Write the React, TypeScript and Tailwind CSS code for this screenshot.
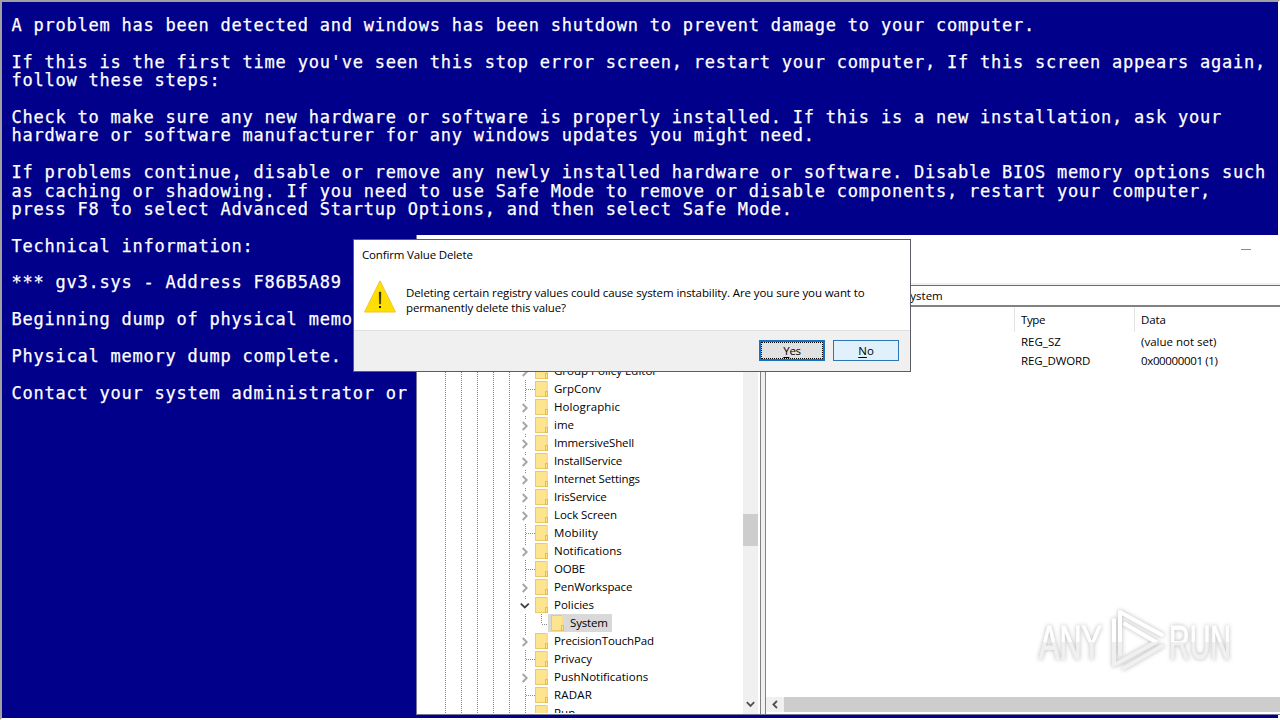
import React from "react";

const stopText: string[] = [
  "A problem has been detected and windows has been shutdown to prevent damage to your computer.",
  "",
  "If this is the first time you've seen this stop error screen, restart your computer, If this screen appears again,",
  "follow these steps:",
  "",
  "Check to make sure any new hardware or software is properly installed. If this is a new installation, ask your",
  "hardware or software manufacturer for any windows updates you might need.",
  "",
  "If problems continue, disable or remove any newly installed hardware or software. Disable BIOS memory options such",
  "as caching or shadowing. If you need to use Safe Mode to remove or disable components, restart your computer,",
  "press F8 to select Advanced Startup Options, and then select Safe Mode.",
  "",
  "Technical information:",
  "",
  "*** gv3.sys - Address F86B5A89",
  "",
  "Beginning dump of physical memo",
  "",
  "Physical memory dump complete.",
  "",
  "Contact your system administrator or",
];

type Kind = "closed" | "leaf" | "open" | "child";
type Row = { name: string; kind: Kind; spacing: string };

const rows: Row[] = [
  { name: "Group Policy Editor", kind: "closed", spacing: "tracking-normal" },
  { name: "GrpConv", kind: "leaf", spacing: "tracking-normal" },
  { name: "Holographic", kind: "closed", spacing: "tracking-[0.09px]" },
  { name: "ime", kind: "closed", spacing: "tracking-normal" },
  { name: "ImmersiveShell", kind: "closed", spacing: "tracking-[-0.14px]" },
  { name: "InstallService", kind: "closed", spacing: "tracking-[-0.14px]" },
  { name: "Internet Settings", kind: "closed", spacing: "tracking-[-0.17px]" },
  { name: "IrisService", kind: "closed", spacing: "tracking-[-0.17px]" },
  { name: "Lock Screen", kind: "closed", spacing: "tracking-[-0.09px]" },
  { name: "Mobility", kind: "leaf", spacing: "tracking-[0.12px]" },
  { name: "Notifications", kind: "closed", spacing: "tracking-normal" },
  { name: "OOBE", kind: "leaf", spacing: "tracking-[-0.2px]" },
  { name: "PenWorkspace", kind: "closed", spacing: "tracking-[-0.1px]" },
  { name: "Policies", kind: "open", spacing: "tracking-normal" },
  { name: "System", kind: "child", spacing: "tracking-[-0.15px]" },
  { name: "PrecisionTouchPad", kind: "closed", spacing: "tracking-[-0.12px]" },
  { name: "Privacy", kind: "leaf", spacing: "tracking-normal" },
  { name: "PushNotifications", kind: "closed", spacing: "tracking-normal" },
  { name: "RADAR", kind: "leaf", spacing: "tracking-[0.2px]" },
  { name: "Run", kind: "leaf", spacing: "tracking-normal" },
];

function Folder() {
  return (
    <svg className="h-[18px] w-[13px] shrink-0" viewBox="0 0 13 18" shapeRendering="crispEdges">
      <rect x="0" y="1" width="13" height="16" fill="#ecca6c" />
      <rect x="1" y="2" width="10" height="14" fill="#fde48f" />
      <rect x="11" y="1" width="2" height="10" fill="#f6dc8c" />
      <rect x="10" y="11" width="3" height="6" fill="#e9bd4c" />
      <rect x="11" y="12" width="1" height="4" fill="#ffe680" />
    </svg>
  );
}

/* Guide lines of the ancestors, one every 16px, then the row's own branch. */
function Guides({ kind }: { kind: Kind }) {
  const dots = { stroke: "#8a8a8a", strokeWidth: 1, strokeDasharray: "1 1" };
  return (
    <svg className="h-[18px] w-[118px] shrink-0" viewBox="0 0 118 18">
      {[28.5, 44.5, 60.5, 76.5, 92.5].map((x) => (
        <path key={x} d={`M${x} 0V18`} fill="none" {...dots} />
      ))}
      {kind === "leaf" && <path d="M108.5 0V18M109 9.5H118" fill="none" {...dots} />}
      {kind === "child" && <path d="M108.5 0V18" fill="none" {...dots} />}
      {(kind === "closed" || kind === "open") && <path d="M108.5 0V3" fill="none" {...dots} />}
      {kind === "closed" && (
        <path d="M105.7 6L109.7 10L105.7 14" fill="none" stroke="#a6a6a6" strokeWidth="1.9" />
      )}
      {kind === "open" && (
        <path d="M103.8 7.7L107.8 11.5L111.8 7.7" fill="none" stroke="#404040" strokeWidth="1.8" />
      )}
    </svg>
  );
}

function TreeRow({ row }: { row: Row }) {
  if (row.kind === "child") {
    return (
      <div className="flex h-[18px]">
        <Guides kind="child" />
        <svg className="h-[18px] w-[13px] shrink-0" viewBox="0 0 13 18">
          <path d="M6.5 0V10M7 10.5H13" fill="none" stroke="#8a8a8a" strokeDasharray="1 1" />
        </svg>
        <div className="flex w-[64px] bg-[#d9d9d9] pl-[3px]">
          <Folder />
          <span className={`ml-[6px] leading-[18px] ${row.spacing}`}>{row.name}</span>
        </div>
      </div>
    );
  }
  return (
    <div className="flex h-[18px]">
      <Guides kind={row.kind} />
      <Folder />
      <span className={`ml-[6px] leading-[18px] whitespace-nowrap ${row.spacing}`}>{row.name}</span>
    </div>
  );
}

function Tree() {
  return (
    <div className="flex w-[343px] shrink-0 bg-white">
      <div className="h-[406px] w-[326px] overflow-hidden pt-[55px]">
        {rows.map((row) => (
          <TreeRow key={row.name} row={row} />
        ))}
      </div>
      <div className="flex w-[15px] flex-col bg-[#f0f0f0]">
        <div className="mt-[207px] h-8 bg-[#cdcdcd]" />
        <svg className="mt-auto mb-[2px] h-[15px] w-[15px]" viewBox="0 0 15 15">
          <path d="M3.8 5.2L7.5 9L11.2 5.2" fill="none" stroke="#505050" strokeWidth="1.8" />
        </svg>
      </div>
    </div>
  );
}

function Values() {
  return (
    <div className="flex min-w-0 flex-1 flex-col bg-white">
      <div className="flex h-[25px] leading-[25px]">
        <div className="w-[249px] border-r border-[#e2e2e2]" />
        <div className="w-[120px] border-r border-[#e2e2e2] pl-[6px] tracking-[-0.4px]">Type</div>
        <div className="pl-[6px] tracking-[-0.1px]">Data</div>
      </div>
      <div className="flex h-[19px] leading-[19px]">
        <div className="w-[249px]" />
        <div className="w-[120px] pl-[6px]">REG_SZ</div>
        <div className="pl-[6px]">(value not set)</div>
      </div>
      <div className="flex h-[19px] leading-[19px]">
        <div className="w-[249px]" />
        <div className="w-[120px] pl-[6px] tracking-[-0.1px]">REG_DWORD</div>
        <div className="pl-[6px] tracking-[-0.36px]">0x00000001 (1)</div>
      </div>
      <div className="mt-auto mb-[2px] flex h-[15px] bg-[#cdcdcd]">
        <svg className="h-[15px] w-[18px] bg-[#f0f0f0]" viewBox="0 0 18 15">
          <path d="M11 4L7.4 7.5L11 11" fill="none" stroke="#505050" strokeWidth="1.8" />
        </svg>
      </div>
    </div>
  );
}

function RegistryEditor() {
  return (
    <div className="absolute top-[235px] left-[416px] flex h-[480px] w-[864px] flex-col border-b border-l border-[#77779a] bg-white">
      <div className="flex h-[50px] shrink-0 justify-end border-b-2 border-[#f0f0f0] pt-[14px] pr-[29px]">
        <div className="h-px w-[10px] bg-[#8a8a8a]" />
      </div>
      <div className="h-[20px] shrink-0 border-t border-[#6b6b6b] pl-[487px] leading-[20px]">System</div>
      <div className="h-[2px] shrink-0 bg-[#828282]" />
      <div className="flex min-h-0 flex-1">
        <Tree />
        <div className="w-[6px] shrink-0 border-x border-[#828282] bg-[#f0f0f0]" />
        <Values />
      </div>
    </div>
  );
}

function ConfirmDialog() {
  return (
    <div className="absolute top-[239px] left-[353px] flex h-[133px] w-[558px] flex-col border border-[#5c5c66] bg-white">
      <div className="h-[30px] pl-2 leading-[29px] tracking-[-0.15px]">Confirm Value Delete</div>
      <div className="flex h-[60px] pt-[10px] pl-[10px]">
        <svg className="h-[33px] w-[32px]" viewBox="0 0 32 33">
          <path d="M16 0.8L31.5 32H0.5Z" fill="#ffdf00" stroke="#f2c230" />
          <path d="M15.2 12H16.9L16.6 24H15.5Z" fill="#1a1a00" stroke="#1a1a00" strokeWidth=".4" />
          <rect x="15" y="26" width="2" height="2" fill="#1a1a00" />
        </svg>
        <div className="ml-[10px] pt-[5px] leading-[15px] tracking-[-0.09px] whitespace-nowrap">
          <p>Deleting certain registry values could cause system instability. Are you sure you want to</p>
          <p className="tracking-[-0.14px]">permanently delete this value?</p>
        </div>
      </div>
      <div className="flex flex-1 justify-end gap-2 border-t border-[#dfdfdf] bg-[#f0f0f0] pt-[9px] pr-[11px]">
        <button className="h-[21px] w-[66px] border-2 border-[#1a70bd] bg-[#e1e1e1]">
          <span className="block h-[17px] w-[62px] border border-dotted border-black leading-[15px] tracking-[-0.3px]">
            <span className="underline underline-offset-2">Y</span>es
          </span>
        </button>
        <button className="h-[21px] w-[66px] border border-[#2b76b5] bg-[#e1f1fc] leading-[20px]">
          <span className="underline underline-offset-2">N</span>o
        </button>
      </div>
    </div>
  );
}

function Watermark() {
  return (
    <svg
      className="absolute top-[600px] left-[1030px] h-[80px] w-[210px] drop-shadow-[0_0_2px_rgba(0,0,0,0.28)]"
      viewBox="0 0 210 80"
    >
      <defs>
        <linearGradient id="mark" x1="0" y1="0" x2="0" y2="80" gradientUnits="userSpaceOnUse">
          <stop offset=".52" stopColor="#ffffff" />
          <stop offset=".52" stopColor="#f0f0f0" />
        </linearGradient>
      </defs>
      <g
        fill="url(#mark)"
        fontFamily="'Liberation Sans', Arial, sans-serif"
        fontWeight="400"
        fontSize="49"
        stroke="url(#mark)"
        strokeWidth="1"
      >
        <text x="9" y="59" textLength="63" lengthAdjust="spacingAndGlyphs">ANY</text>
        <text x="139" y="59" textLength="62" lengthAdjust="spacingAndGlyphs">RUN</text>
      </g>
      <g fill="none" stroke="url(#mark)" strokeWidth="4" strokeLinejoin="round" strokeLinecap="round">
        <path d="M90 54V12L132 35" />
        <path d="M95 24L126 42L84 65V20" />
        <path d="M94 68L132 46" />
      </g>
    </svg>
  );
}

export default function App() {
  return (
    <div className="relative h-[720px] w-[1280px] overflow-hidden bg-[#00008a] font-['Open_Sans','Noto_Sans',sans-serif] text-[11.5px] text-black">
      <div className="h-[720px] border-2 border-t-[#a0a0a0] border-r-white border-b-white border-l-[#a0a0a0] pt-[14px] pl-[9.5px] font-['DejaVu_Sans_Mono',monospace] text-[17px] leading-[18.4px] tracking-[0.77px] whitespace-pre text-white [-webkit-text-stroke:0.25px_white]">
        {stopText.map((line, i) => (
          <div key={i} className="h-[18.4px]">
            {line}
          </div>
        ))}
      </div>
      <RegistryEditor />
      <ConfirmDialog />
      <Watermark />
    </div>
  );
}
